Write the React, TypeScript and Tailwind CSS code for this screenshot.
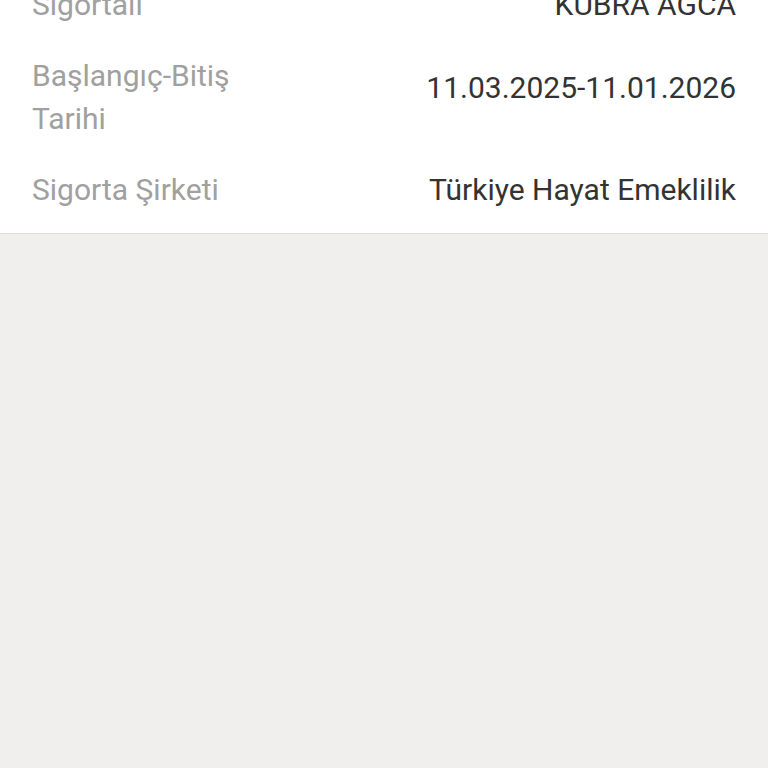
import React from "react";

interface Row {
  label: string;
  value: string;
  valueClass?: string;
}

const rows: Row[] = [
  { label: "Sigortalı", value: "KÜBRA AĞCA" },
  { label: "Başlangıç-Bitiş Tarihi", value: "11.03.2025-11.01.2026", valueClass: "-mt-5" },
  { label: "Sigorta Şirketi", value: "Türkiye Hayat Emeklilik" },
];

export default function App() {
  return (
    <div
      className="flex min-h-screen w-full flex-col bg-[#f0efee]"
      style={{ fontFamily: "Roboto, 'Noto Sans', sans-serif" }}
    >
      {/* poliçe detay kartı */}
      <div className="-mt-[31px] bg-white border-b border-[#dedede] px-8 pb-[8px]">
        {rows.map((row) => (
          <div key={row.label} className="flex items-center justify-between py-[14px]">
            <div className="w-[240px] text-[30px] leading-[43px] text-[#a0a0a0]">
              {row.label}
            </div>
            <div
              className={`text-right text-[30px] leading-[43px] text-[#333333] ${row.valueClass ?? ""}`}
            >
              {row.value}
            </div>
          </div>
        ))}
      </div>
    </div>
  );
}
